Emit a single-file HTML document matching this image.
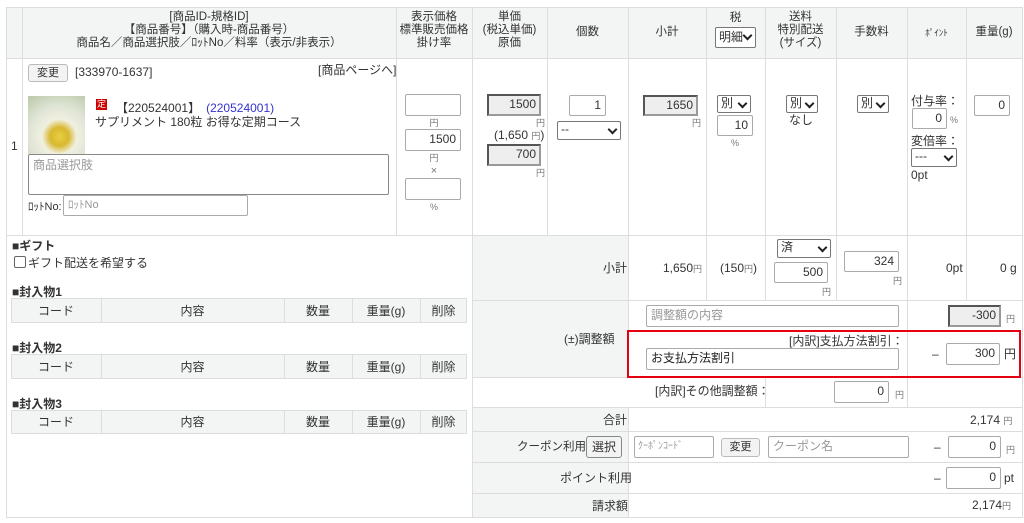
<!DOCTYPE html>
<html><head><meta charset="utf-8"><style>
*{box-sizing:border-box;margin:0;padding:0}
body{width:1024px;height:523px;background:#fff;position:relative;overflow:hidden;font-family:"Liberation Sans","Noto Sans CJK JP",sans-serif;font-size:12px;line-height:14px;color:#333}
div,span{position:absolute}
.h{height:1px;background:#ddd}
.v{width:1px;background:#ddd}
.g{background:#f3f4f4}
.in{background:#fff;border:1px solid #aaa;border-radius:2px;text-align:right;padding-right:4px;line-height:19px;font-size:12px}
.gin{background:#eee;border:2px solid #555;border-right-color:#999;border-bottom-color:#999;text-align:right;padding-right:3px;line-height:17px;font-size:12px}
.sel{background:#fff;border:1px solid #777;border-radius:2px;font-size:12px;line-height:15px;padding-left:3px}
.sel:after{content:"";position:absolute;right:4px;top:4px;width:5px;height:5px;border-right:2px solid #222;border-bottom:2px solid #222;transform:rotate(45deg)}
.btn{background:#f3f3f3;border:1px solid #bbb;border-radius:3px;text-align:center;font-size:11px}
.s{font-size:9px;color:#777}
.c{text-align:center}
</style></head><body>
<div class="g" style="left:6px;top:7px;width:1016px;height:51px"></div>
<div class="g" style="left:472px;top:235px;width:156px;height:142px"></div>
<div class="g" style="left:472px;top:407px;width:156px;height:110px"></div>
<div class="h" style="left:6px;top:7px;width:1017px"></div>
<div class="h" style="left:6px;top:58px;width:1017px"></div>
<div class="h" style="left:6px;top:235px;width:1017px"></div>
<div class="h" style="left:472px;top:300px;width:551px"></div>
<div class="h" style="left:472px;top:377px;width:551px"></div>
<div class="h" style="left:472px;top:407px;width:551px"></div>
<div class="h" style="left:472px;top:431px;width:551px"></div>
<div class="h" style="left:472px;top:462px;width:551px"></div>
<div class="h" style="left:472px;top:493px;width:551px"></div>
<div class="h" style="left:6px;top:517px;width:1017px"></div>
<div class="v" style="left:6px;top:7px;height:511px"></div>
<div class="v" style="left:1022px;top:7px;height:511px"></div>
<div class="v" style="left:22px;top:7px;height:228px"></div>
<div class="v" style="left:396px;top:7px;height:228px"></div>
<div class="v" style="left:472px;top:7px;height:511px"></div>
<div class="v" style="left:547px;top:7px;height:228px"></div>
<div class="v" style="left:628px;top:7px;height:370px"></div>
<div class="v" style="left:706px;top:7px;height:293px"></div>
<div class="v" style="left:765px;top:7px;height:293px"></div>
<div class="v" style="left:836px;top:7px;height:293px"></div>
<div class="v" style="left:907px;top:7px;height:400px"></div>
<div class="v" style="left:966px;top:7px;height:293px"></div>
<div class="v" style="left:765px;top:377px;height:30px"></div>
<div class="v" style="left:628px;top:407px;height:110px"></div>

<div class="c" style="left:22px;top:11px;width:374px;line-height:13px;font-size:11.5px">[商品ID-規格ID]<br>【商品番号】（購入時-商品番号）<br>商品名／商品選択肢／ﾛｯﾄNo／料率（表示/非表示）</div>
<div class="c" style="left:396px;top:11px;width:76px;line-height:13px;font-size:11.5px">表示価格<br>標準販売価格<br>掛け率</div>
<div class="c" style="left:472px;top:11px;width:75px;line-height:13px;font-size:11.5px">単価<br>(税込単価)<br>原価</div>
<div class="c" style="left:547px;top:25px;width:81px;font-size:11.5px">個数</div>
<div class="c" style="left:628px;top:25px;width:78px;font-size:11.5px">小計</div>
<div class="c" style="left:706px;top:11px;width:59px;font-size:11.5px">税</div>
<div class="sel" style="left:715px;top:27px;width:41px;height:21px;line-height:19px">明細</div>
<div class="c" style="left:765px;top:11px;width:71px;line-height:13px;font-size:11.5px">送料<br>特別配送<br>(サイズ)</div>
<div class="c" style="left:836px;top:25px;width:71px;font-size:11.5px">手数料</div>
<div class="c" style="left:907px;top:26px;width:30px;font-size:9px;left:907px;width:59px">ﾎﾟｲﾝﾄ</div>
<div class="c" style="left:966px;top:25px;width:56px;font-size:11.5px">重量(g)</div>

<div style="left:11px;top:139px">1</div>
<div class="btn" style="left:28px;top:64px;width:40px;height:18px;line-height:16px">変更</div>
<div style="left:75px;top:65px">[333970-1637]</div>
<div style="left:318px;top:63px">[商品ページへ]</div>
<div style="left:28px;top:96px;width:57px;height:58px;background:radial-gradient(circle at 55% 70%,#e8d040 0,#d8b830 18%,#f0f0e0 34%,#dfe4d4 60%,#b8c8a8 100%)"></div>
<div style="left:96px;top:99px;width:11px;height:11px;background:#c00;color:#fff;font-size:9px;line-height:11px;text-align:center">定</div>
<div style="left:116px;top:101px">【220524001】　<span style="position:static;color:#33c">(220524001)</span></div>
<div style="left:95px;top:115px">サプリメント 180粒 お得な定期コース</div>
<div style="left:28px;top:154px;width:361px;height:41px;border:1px solid #888;border-radius:2px;padding:3px 4px;color:#999">商品選択肢</div>
<div style="left:28px;top:200px;font-size:11px">ﾛｯﾄNo:</div>
<div style="left:63px;top:195px;width:185px;height:21px;border:1px solid #aaa;border-radius:2px;padding-left:4px;line-height:19px;color:#999;font-size:11px">ﾛｯﾄNo</div>

<div class="in" style="left:405px;top:94px;width:56px;height:22px"></div>
<div class="s c" style="left:396px;top:116px;width:76px">円</div>
<div class="in" style="left:405px;top:129px;width:56px;height:22px">1500</div>
<div class="s c" style="left:396px;top:151px;width:76px">円</div>
<div class="s c" style="left:396px;top:164px;width:76px;font-size:11px">×</div>
<div class="in" style="left:405px;top:178px;width:56px;height:22px"></div>
<div class="s c" style="left:396px;top:200px;width:76px">%</div>

<div class="gin" style="left:487px;top:94px;width:54px;height:22px">1500</div>
<div class="s" style="left:536px;top:116px">円</div>
<div style="left:494px;top:128px">(1,650 <span class="s" style="position:static">円</span>)</div>
<div class="gin" style="left:487px;top:144px;width:54px;height:22px">700</div>
<div class="s" style="left:536px;top:166px">円</div>

<div class="in" style="left:569px;top:95px;width:37px;height:21px">1</div>
<div class="sel" style="left:557px;top:121px;width:64px;height:19px">--</div>

<div class="gin" style="left:643px;top:95px;width:55px;height:21px">1650</div>
<div class="s" style="left:692px;top:116px">円</div>

<div class="sel" style="left:717px;top:95px;width:34px;height:18px">別</div>
<div class="in" style="left:717px;top:115px;width:36px;height:21px">10</div>
<div class="s c" style="left:717px;top:136px;width:36px">%</div>

<div class="sel" style="left:786px;top:95px;width:32px;height:18px">別</div>
<div style="left:789px;top:113px">なし</div>
<div class="sel" style="left:857px;top:95px;width:32px;height:18px">別</div>

<div style="left:911px;top:94px">付与率：</div>
<div class="in" style="left:912px;top:108px;width:35px;height:21px">0</div>
<div class="s" style="left:950px;top:113px">%</div>
<div style="left:911px;top:134px">変倍率：</div>
<div class="sel" style="left:911px;top:148px;width:46px;height:19px">---</div>
<div style="left:911px;top:168px">0pt</div>
<div class="in" style="left:974px;top:95px;width:36px;height:21px">0</div>

<div style="left:12px;top:239px;font-weight:bold">■ギフト</div>
<div style="left:14px;top:256px;width:12px;height:12px;border:1px solid #666;border-radius:2px"></div>
<div style="left:28px;top:256px">ギフト配送を希望する</div>
<div style="left:12px;top:285px;font-weight:bold">■封入物1</div>
<div style="left:12px;top:341px;font-weight:bold">■封入物2</div>
<div style="left:12px;top:397px;font-weight:bold">■封入物3</div>

<div style="left:11px;top:298px;width:456px;height:25px;border:1px solid #ddd;background:#f3f4f4"></div>
<div style="left:11px;top:354px;width:456px;height:25px;border:1px solid #ddd;background:#f3f4f4"></div>
<div style="left:11px;top:410px;width:456px;height:24px;border:1px solid #ddd;background:#f3f4f4"></div>
<div class="v" style="left:101px;top:298px;height:25px"></div><div class="v" style="left:284px;top:298px;height:25px"></div><div class="v" style="left:352px;top:298px;height:25px"></div><div class="v" style="left:420px;top:298px;height:25px"></div>
<div class="v" style="left:101px;top:354px;height:25px"></div><div class="v" style="left:284px;top:354px;height:25px"></div><div class="v" style="left:352px;top:354px;height:25px"></div><div class="v" style="left:420px;top:354px;height:25px"></div>
<div class="v" style="left:101px;top:410px;height:24px"></div><div class="v" style="left:284px;top:410px;height:24px"></div><div class="v" style="left:352px;top:410px;height:24px"></div><div class="v" style="left:420px;top:410px;height:24px"></div>
<div class="c" style="left:11px;top:304px;width:90px">コード</div><div class="c" style="left:101px;top:304px;width:183px">内容</div><div class="c" style="left:284px;top:304px;width:68px">数量</div><div class="c" style="left:352px;top:304px;width:68px">重量(g)</div><div class="c" style="left:420px;top:304px;width:47px">削除</div>
<div class="c" style="left:11px;top:360px;width:90px">コード</div><div class="c" style="left:101px;top:360px;width:183px">内容</div><div class="c" style="left:284px;top:360px;width:68px">数量</div><div class="c" style="left:352px;top:360px;width:68px">重量(g)</div><div class="c" style="left:420px;top:360px;width:47px">削除</div>
<div class="c" style="left:11px;top:415px;width:90px">コード</div><div class="c" style="left:101px;top:415px;width:183px">内容</div><div class="c" style="left:284px;top:415px;width:68px">数量</div><div class="c" style="left:352px;top:415px;width:68px">重量(g)</div><div class="c" style="left:420px;top:415px;width:47px">削除</div>

<div style="left:603px;top:261px">小計</div>
<div style="left:663px;top:261px">1,650<span class="s" style="position:static">円</span></div>
<div style="left:720px;top:261px">(150<span class="s" style="position:static">円</span>)</div>
<div class="sel" style="left:777px;top:239px;width:54px;height:19px">済</div>
<div class="in" style="left:774px;top:262px;width:54px;height:21px">500</div>
<div class="s" style="left:822px;top:285px">円</div>
<div class="in" style="left:844px;top:251px;width:55px;height:21px">324</div>
<div class="s" style="left:893px;top:274px">円</div>
<div style="left:946px;top:261px">0pt</div>
<div style="left:1000px;top:261px">0 g</div>

<div style="left:564px;top:332px">(±)調整額</div>
<div class="in" style="left:646px;top:305px;width:253px;height:22px;text-align:left;padding-left:4px;color:#999">調整額の内容</div>
<div class="gin" style="left:948px;top:305px;width:53px;height:22px">-300</div>
<div class="s" style="left:1006px;top:312px">円</div>
<div style="left:627px;top:330px;width:394px;height:48px;border:2px solid #e60012"></div>
<div style="left:789px;top:334px">[内訳]支払方法割引：</div>
<div class="in" style="left:646px;top:348px;width:253px;height:22px;text-align:left;padding-left:4px;color:#222">お支払方法割引</div>
<div style="left:932px;top:347px">–</div>
<div class="in" style="left:946px;top:343px;width:54px;height:22px">300</div>
<div style="left:1004px;top:347px">円</div>
<div style="left:655px;top:384px">[内訳]その他調整額：</div>
<div class="in" style="left:834px;top:381px;width:55px;height:22px">0</div>
<div class="s" style="left:895px;top:388px">円</div>

<div style="left:603px;top:413px">合計</div>
<div style="left:970px;top:413px">2,174 <span class="s" style="position:static">円</span></div>
<div style="left:517px;top:440px;font-size:11.5px">クーポン利用</div>
<div class="btn" style="left:586px;top:436px;width:36px;height:22px;line-height:20px;font-size:12px;border-color:#888">選択</div>
<div class="in" style="left:634px;top:436px;width:80px;height:22px;text-align:left;padding-left:3px;color:#999;font-size:10px">ｸｰﾎﾟﾝｺｰﾄﾞ</div>
<div class="btn" style="left:721px;top:438px;width:39px;height:19px;line-height:17px">変更</div>
<div class="in" style="left:768px;top:436px;width:141px;height:22px;text-align:left;padding-left:4px;color:#999">クーポン名</div>
<div style="left:934px;top:440px">–</div>
<div class="in" style="left:948px;top:436px;width:53px;height:22px">0</div>
<div class="s" style="left:1006px;top:443px">円</div>
<div style="left:560px;top:471px">ポイント利用</div>
<div style="left:934px;top:471px">–</div>
<div class="in" style="left:946px;top:467px;width:55px;height:22px">0</div>
<div style="left:1004px;top:471px">pt</div>
<div style="left:592px;top:499px">請求額</div>
<div style="left:972px;top:498px">2,174<span class="s" style="position:static">円</span></div>
</body></html>
